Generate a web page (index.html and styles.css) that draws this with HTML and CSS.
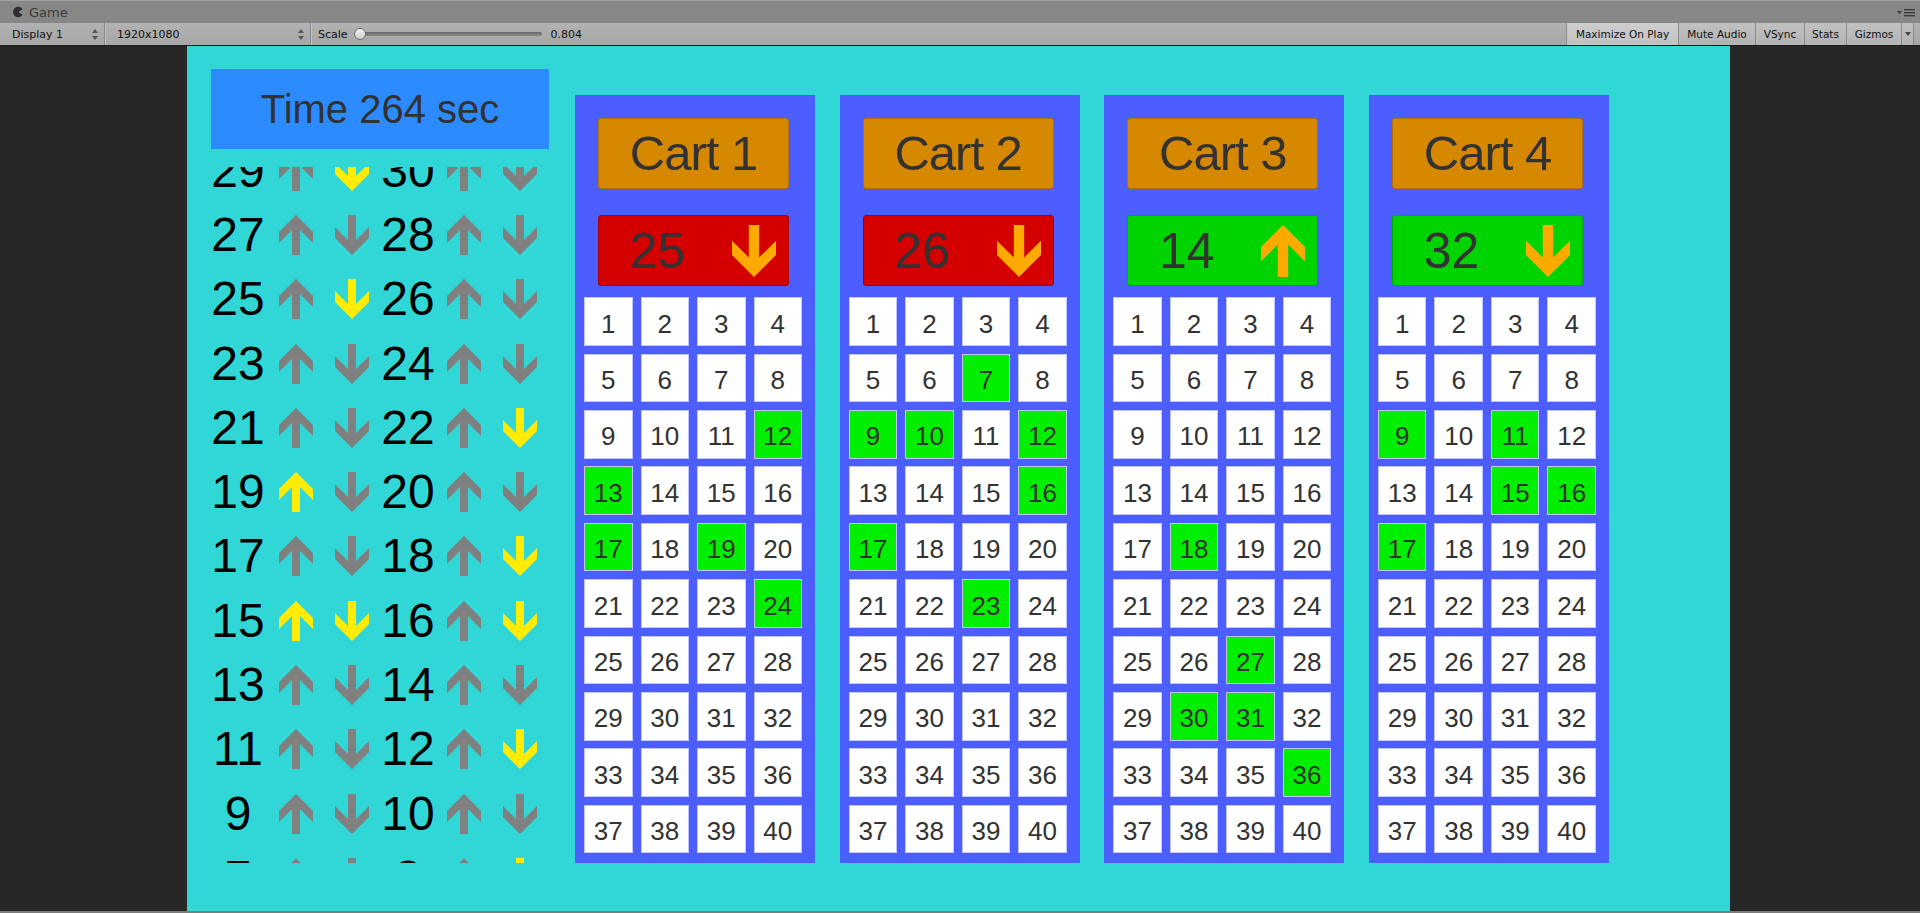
FILE: index.html
```html
<!DOCTYPE html>
<html>
<head>
<meta charset="utf-8">
<title>Game</title>
<link rel="stylesheet" href="styles.css">
</head>
<body>
<svg class="defs" width="0" height="0" aria-hidden="true">
  <defs>
    <symbol id="up" viewBox="0 0 34 40"><polygon points="17,0 34,17 34,28 21,15 21,40 13,40 13,15 0,28 0,17"/></symbol>
    <symbol id="down" viewBox="0 0 34 40"><polygon points="13,0 21,0 21,25 34,12 34,23 17,40 0,23 0,12 13,25"/></symbol>
    <symbol id="updown" viewBox="0 0 6 11"><polygon points="3,0 6,4 0,4"/><polygon points="0,7 6,7 3,11"/></symbol>
  </defs>
</svg>
<div class="editor">
  <div class="titlebar">
    <div class="tab">
      <svg class="tab-icon" viewBox="0 0 12 12"><path d="M10.6 3.2 A5.2 5.2 0 1 0 10.6 8.8 L6.4 6 Z"/></svg>
      <span>Game</span>
    </div>
    <div class="tabmenu">
      <svg viewBox="0 0 18 9"><polygon points="0,3 5,3 2.5,6"/><rect x="7" y="1" width="11" height="1.4"/><rect x="7" y="4" width="11" height="1.4"/><rect x="7" y="7" width="11" height="1.4"/></svg>
    </div>
  </div>
  <div class="toolbar">
    <div class="tb-drop display"><span>Display 1</span><svg class="ud"><use href="#updown"/></svg></div>
    <div class="tb-drop res"><span>1920x1080</span><svg class="ud"><use href="#updown"/></svg></div>
    <div class="tb-scale">
      <span>Scale</span>
      <div class="slider"><div class="track"></div><div class="thumb"></div></div>
      <span>0.804</span>
    </div>
    <div class="tb-fill"></div>
    <div class="tb-btn maximize">Maximize On Play</div>
    <div class="tb-btn mute">Mute Audio</div>
    <div class="tb-btn vsync">VSync</div>
    <div class="tb-btn stats">Stats</div>
    <div class="tb-btn gizmos">Gizmos</div>
    <div class="tb-btn caret"><svg viewBox="0 0 6 4"><polygon points="0,0 6,0 3,4"/></svg></div>
  </div>
  <div class="view">
    <div class="game">
      <div class="leftcol">
        <div class="timebox">Time 264 sec</div>
        <div class="scroll">
          <div class="list">
            <div class="row"><span class="num">29</span><svg class="arr up1"><use href="#up"/></svg><svg class="arr down1 on"><use href="#down"/></svg><span class="num num2">30</span><svg class="arr up2"><use href="#up"/></svg><svg class="arr down2"><use href="#down"/></svg></div>
            <div class="row"><span class="num">27</span><svg class="arr up1"><use href="#up"/></svg><svg class="arr down1"><use href="#down"/></svg><span class="num num2">28</span><svg class="arr up2"><use href="#up"/></svg><svg class="arr down2"><use href="#down"/></svg></div>
            <div class="row"><span class="num">25</span><svg class="arr up1"><use href="#up"/></svg><svg class="arr down1 on"><use href="#down"/></svg><span class="num num2">26</span><svg class="arr up2"><use href="#up"/></svg><svg class="arr down2"><use href="#down"/></svg></div>
            <div class="row"><span class="num">23</span><svg class="arr up1"><use href="#up"/></svg><svg class="arr down1"><use href="#down"/></svg><span class="num num2">24</span><svg class="arr up2"><use href="#up"/></svg><svg class="arr down2"><use href="#down"/></svg></div>
            <div class="row"><span class="num">21</span><svg class="arr up1"><use href="#up"/></svg><svg class="arr down1"><use href="#down"/></svg><span class="num num2">22</span><svg class="arr up2"><use href="#up"/></svg><svg class="arr down2 on"><use href="#down"/></svg></div>
            <div class="row"><span class="num">19</span><svg class="arr up1 on"><use href="#up"/></svg><svg class="arr down1"><use href="#down"/></svg><span class="num num2">20</span><svg class="arr up2"><use href="#up"/></svg><svg class="arr down2"><use href="#down"/></svg></div>
            <div class="row"><span class="num">17</span><svg class="arr up1"><use href="#up"/></svg><svg class="arr down1"><use href="#down"/></svg><span class="num num2">18</span><svg class="arr up2"><use href="#up"/></svg><svg class="arr down2 on"><use href="#down"/></svg></div>
            <div class="row"><span class="num">15</span><svg class="arr up1 on"><use href="#up"/></svg><svg class="arr down1 on"><use href="#down"/></svg><span class="num num2">16</span><svg class="arr up2"><use href="#up"/></svg><svg class="arr down2 on"><use href="#down"/></svg></div>
            <div class="row"><span class="num">13</span><svg class="arr up1"><use href="#up"/></svg><svg class="arr down1"><use href="#down"/></svg><span class="num num2">14</span><svg class="arr up2"><use href="#up"/></svg><svg class="arr down2"><use href="#down"/></svg></div>
            <div class="row"><span class="num">11</span><svg class="arr up1"><use href="#up"/></svg><svg class="arr down1"><use href="#down"/></svg><span class="num num2">12</span><svg class="arr up2"><use href="#up"/></svg><svg class="arr down2 on"><use href="#down"/></svg></div>
            <div class="row"><span class="num">9</span><svg class="arr up1"><use href="#up"/></svg><svg class="arr down1"><use href="#down"/></svg><span class="num num2">10</span><svg class="arr up2"><use href="#up"/></svg><svg class="arr down2"><use href="#down"/></svg></div>
            <div class="row"><span class="num">7</span><svg class="arr up1"><use href="#up"/></svg><svg class="arr down1"><use href="#down"/></svg><span class="num num2">8</span><svg class="arr up2"><use href="#up"/></svg><svg class="arr down2 on"><use href="#down"/></svg></div>
            <div class="row"><span class="num">5</span><svg class="arr up1"><use href="#up"/></svg><svg class="arr down1"><use href="#down"/></svg><span class="num num2">6</span><svg class="arr up2"><use href="#up"/></svg><svg class="arr down2"><use href="#down"/></svg></div>
          </div>
        </div>
      </div>
      <div class="carts">
        <div class="panel">
          <div class="label">Cart 1</div>
          <div class="floor red"><span class="fnum">25</span><svg class="farr"><use href="#down"/></svg></div>
          <div class="grid">
            <div class="cell">1</div><div class="cell">2</div><div class="cell">3</div><div class="cell">4</div>
            <div class="cell">5</div><div class="cell">6</div><div class="cell">7</div><div class="cell">8</div>
            <div class="cell">9</div><div class="cell">10</div><div class="cell">11</div><div class="cell g">12</div>
            <div class="cell g">13</div><div class="cell">14</div><div class="cell">15</div><div class="cell">16</div>
            <div class="cell g">17</div><div class="cell">18</div><div class="cell g">19</div><div class="cell">20</div>
            <div class="cell">21</div><div class="cell">22</div><div class="cell">23</div><div class="cell g">24</div>
            <div class="cell">25</div><div class="cell">26</div><div class="cell">27</div><div class="cell">28</div>
            <div class="cell">29</div><div class="cell">30</div><div class="cell">31</div><div class="cell">32</div>
            <div class="cell">33</div><div class="cell">34</div><div class="cell">35</div><div class="cell">36</div>
            <div class="cell">37</div><div class="cell">38</div><div class="cell">39</div><div class="cell">40</div>
          </div>
        </div>
        <div class="panel">
          <div class="label">Cart 2</div>
          <div class="floor red"><span class="fnum">26</span><svg class="farr"><use href="#down"/></svg></div>
          <div class="grid">
            <div class="cell">1</div><div class="cell">2</div><div class="cell">3</div><div class="cell">4</div>
            <div class="cell">5</div><div class="cell">6</div><div class="cell g">7</div><div class="cell">8</div>
            <div class="cell g">9</div><div class="cell g">10</div><div class="cell">11</div><div class="cell g">12</div>
            <div class="cell">13</div><div class="cell">14</div><div class="cell">15</div><div class="cell g">16</div>
            <div class="cell g">17</div><div class="cell">18</div><div class="cell">19</div><div class="cell">20</div>
            <div class="cell">21</div><div class="cell">22</div><div class="cell g">23</div><div class="cell">24</div>
            <div class="cell">25</div><div class="cell">26</div><div class="cell">27</div><div class="cell">28</div>
            <div class="cell">29</div><div class="cell">30</div><div class="cell">31</div><div class="cell">32</div>
            <div class="cell">33</div><div class="cell">34</div><div class="cell">35</div><div class="cell">36</div>
            <div class="cell">37</div><div class="cell">38</div><div class="cell">39</div><div class="cell">40</div>
          </div>
        </div>
        <div class="panel">
          <div class="label">Cart 3</div>
          <div class="floor green"><span class="fnum">14</span><svg class="farr"><use href="#up"/></svg></div>
          <div class="grid">
            <div class="cell">1</div><div class="cell">2</div><div class="cell">3</div><div class="cell">4</div>
            <div class="cell">5</div><div class="cell">6</div><div class="cell">7</div><div class="cell">8</div>
            <div class="cell">9</div><div class="cell">10</div><div class="cell">11</div><div class="cell">12</div>
            <div class="cell">13</div><div class="cell">14</div><div class="cell">15</div><div class="cell">16</div>
            <div class="cell">17</div><div class="cell g">18</div><div class="cell">19</div><div class="cell">20</div>
            <div class="cell">21</div><div class="cell">22</div><div class="cell">23</div><div class="cell">24</div>
            <div class="cell">25</div><div class="cell">26</div><div class="cell g">27</div><div class="cell">28</div>
            <div class="cell">29</div><div class="cell g">30</div><div class="cell g">31</div><div class="cell">32</div>
            <div class="cell">33</div><div class="cell">34</div><div class="cell">35</div><div class="cell g">36</div>
            <div class="cell">37</div><div class="cell">38</div><div class="cell">39</div><div class="cell">40</div>
          </div>
        </div>
        <div class="panel">
          <div class="label">Cart 4</div>
          <div class="floor green"><span class="fnum">32</span><svg class="farr"><use href="#down"/></svg></div>
          <div class="grid">
            <div class="cell">1</div><div class="cell">2</div><div class="cell">3</div><div class="cell">4</div>
            <div class="cell">5</div><div class="cell">6</div><div class="cell">7</div><div class="cell">8</div>
            <div class="cell g">9</div><div class="cell">10</div><div class="cell g">11</div><div class="cell">12</div>
            <div class="cell">13</div><div class="cell">14</div><div class="cell g">15</div><div class="cell g">16</div>
            <div class="cell g">17</div><div class="cell">18</div><div class="cell">19</div><div class="cell">20</div>
            <div class="cell">21</div><div class="cell">22</div><div class="cell">23</div><div class="cell">24</div>
            <div class="cell">25</div><div class="cell">26</div><div class="cell">27</div><div class="cell">28</div>
            <div class="cell">29</div><div class="cell">30</div><div class="cell">31</div><div class="cell">32</div>
            <div class="cell">33</div><div class="cell">34</div><div class="cell">35</div><div class="cell">36</div>
            <div class="cell">37</div><div class="cell">38</div><div class="cell">39</div><div class="cell">40</div>
          </div>
        </div>
      </div>
    </div>
  </div>
  <div class="bottomline"></div>
</div>
</body>
</html>
```

FILE: styles.css
```css
html, body {
  margin: 0;
  padding: 0;
}
body {
  width: 1920px;
  height: 913px;
  overflow: hidden;
  background: #262626;
  font-family: "DejaVu Sans", sans-serif;
}
.defs {
  position: absolute;
  width: 0;
  height: 0;
}
.editor {
  display: flex;
  flex-direction: column;
  width: 1920px;
  height: 913px;
}

/* ---------- title bar ---------- */
.titlebar {
  height: 23px;
  box-sizing: border-box;
  border-top: 1px solid #a2a2a2;
  background: #878787;
  display: flex;
  align-items: center;
  justify-content: space-between;
}
.tab {
  display: flex;
  align-items: center;
  gap: 5px;
  padding-left: 12px;
  font-size: 13px;
  color: #3a3a3a;
}
.tab-icon {
  width: 12px;
  height: 12px;
  fill: #2e2e2e;
}
.tabmenu {
  padding-right: 5px;
  display: flex;
  align-items: center;
}
.tabmenu svg {
  width: 18px;
  height: 9px;
  fill: #3c3c3c;
}

/* ---------- toolbar ---------- */
.toolbar {
  height: 23px;
  box-sizing: border-box;
  border-bottom: 1px solid #1b1b1b;
  background: linear-gradient(#b2b2b2, #a6a6a6);
  display: flex;
  align-items: stretch;
  font-size: 11px;
  color: #111;
}
.tb-drop {
  display: flex;
  align-items: center;
  box-sizing: border-box;
  border-right: 1px solid #8a8a8a;
  box-shadow: 1px 0 0 #c4c4c4;
}
.tb-drop span {
  flex: 1;
}
.tb-drop.display {
  width: 105px;
  padding: 0 6px 0 12px;
}
.tb-drop.res {
  width: 206px;
  padding: 0 6px 0 12px;
}
.ud {
  width: 6px;
  height: 11px;
  fill: #555;
}
.tb-scale {
  display: flex;
  align-items: center;
  padding-left: 7px;
}
.slider {
  position: relative;
  width: 192px;
  height: 12px;
  margin: 0 5px 0 6px;
}
.track {
  position: absolute;
  left: 7px;
  right: 4px;
  top: 4px;
  height: 4px;
  border-radius: 2px;
  background: linear-gradient(#6a6a6a, #8a8a8a);
}
.thumb {
  position: absolute;
  left: 0;
  top: 0;
  width: 10px;
  height: 10px;
  border-radius: 50%;
  background: linear-gradient(#f2f2f2, #cfcfcf);
  border: 1px solid #6d6d6d;
}
.tb-fill {
  flex: 1;
}
.tb-btn {
  display: flex;
  align-items: center;
  justify-content: center;
  box-sizing: border-box;
  border-left: 1px solid #8a8a8a;
  background: linear-gradient(#c0c0c0, #b3b3b3);
  font-size: 10.5px;
  color: #111;
}
.tb-btn.maximize {
  width: 112px;
  background: linear-gradient(#cdcdcd, #c2c2c2);
}
.tb-btn.mute { width: 77px; }
.tb-btn.vsync { width: 49px; }
.tb-btn.stats { width: 42px; }
.tb-btn.gizmos { width: 55px; }
.tb-btn.caret {
  width: 13px;
  margin-right: 6px;
  border-right: 1px solid #8a8a8a;
}
.tb-btn.caret svg {
  width: 6px;
  height: 4px;
  fill: #444;
}

/* ---------- game view ---------- */
.view {
  height: 865px;
  background: #272727;
}
.bottomline {
  height: 2px;
  background: #7d7d7d;
}
.game {
  margin-left: 187px;
  width: 1543px;
  height: 865px;
  box-sizing: border-box;
  background: #31d7d7;
  padding: 23px 0 0 24px;
  display: flex;
  align-items: flex-start;
  font-family: "Liberation Sans", Arial, sans-serif;
}
.leftcol {
  width: 338px;
}
.timebox {
  height: 80px;
  background: #2b8bff;
  color: #323232;
  font-size: 40px;
  line-height: 1;
  display: flex;
  align-items: center;
  justify-content: center;
}
.scroll {
  margin-top: 18px;
  height: 696px;
  overflow: hidden;
}
.list {
  margin-top: -28.5px;
}
.row {
  height: 64.3px;
  display: flex;
  align-items: center;
}
.num {
  width: 54px;
  text-align: center;
  font-size: 48px;
  line-height: 1;
  color: #000;
}
.arr {
  width: 34px;
  height: 40px;
  fill: #808080;
  flex: none;
}
.arr.on {
  fill: #ffeb04;
}
.up1 { margin-left: 14px; }
.down1 { margin-left: 22px; }
.num2 { margin-left: 12px; }
.up2 { margin-left: 12px; }
.down2 { margin-left: 22px; }

/* ---------- carts ---------- */
.carts {
  margin-left: 26px;
  margin-top: 26px;
  display: grid;
  grid-template-columns: repeat(4, 240px);
  column-gap: 24.67px;
}
.panel {
  height: 768px;
  box-sizing: border-box;
  padding-top: 23px;
  background: #4c5eff;
}
.label,
.floor {
  margin-left: 23px;
  width: 191px;
  height: 71px;
  box-sizing: border-box;
  border-radius: 3px;
  color: #323232;
  font-size: 50px;
  line-height: 1;
  display: flex;
  align-items: center;
}
.label {
  background: #d68800;
  border: 1px solid #b06f00;
  justify-content: center;
  font-size: 49px;
  letter-spacing: -1px;
}
.floor {
  margin-top: 26px;
}
.floor.red {
  background: #d40000;
  border: 1px solid #a80000;
}
.floor.green {
  background: #00d400;
  border: 1px solid #00a800;
}
.fnum {
  width: 117px;
  text-align: center;
}
.farr {
  width: 44px;
  height: 52px;
  margin-left: 16px;
  fill: #ffaa00;
}
.grid {
  margin: 11.3px 0 0 9px;
  display: grid;
  grid-template-columns: repeat(4, 48.5px);
  grid-auto-rows: 48.5px;
  column-gap: 8px;
  row-gap: 7.9px;
}
.cell {
  box-sizing: border-box;
  border: 1px solid #c3c7ff;
  background: #fff;
  color: #323232;
  font-size: 26px;
  line-height: 1;
  padding-top: 4px;
  display: flex;
  align-items: center;
  justify-content: center;
}
.cell.g {
  background: #00ee00;
}
```
